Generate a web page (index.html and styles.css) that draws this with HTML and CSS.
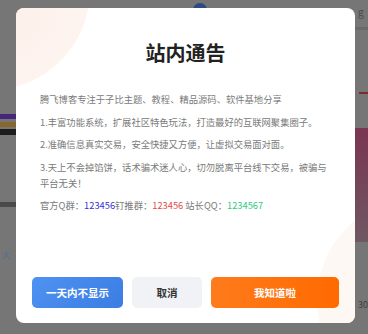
FILE: index.html
```html
<!DOCTYPE html>
<html lang="zh-CN">
<head>
  <meta charset="UTF-8">
  <meta name="viewport" content="width=device-width, initial-scale=1.0">
  <title>站内通告</title>
  <link rel="stylesheet" href="styles.css">
</head>
<body>
  <div class="page">
    <aside class="side side-left">
      <div class="bar bar-purple"></div>
      <div class="bar bar-orange"></div>
      <div class="bar bar-black"></div>
      <div class="bar bar-line"></div>
      <span class="tag">大</span>
    </aside>

    <main class="center">
      <div class="topline"><span class="avatar"></span></div>

      <div class="notice">
        <span class="glow glow-tl"></span>
        <span class="glow glow-br"></span>

        <h2 class="notice-title">站内通告</h2>

        <div class="notice-body">
          <p>腾飞博客专注于子比主题、教程、精品源码、软件基地分享</p>
          <p>1.丰富功能系统，扩展社区特色玩法，打造最好的互联网聚集圈子。</p>
          <p>2.准确信息真实交易，安全快捷又方便，让虚拟交易面对面。</p>
          <p>3.天上不会掉馅饼，话术骗术迷人心，切勿脱离平台线下交易，被骗与平台无关！</p>
          <p>官方Q群：<span class="c-blue">123456</span>钉推群：<span class="c-red">123456</span> 站长QQ：<span class="c-green">1234567</span></p>
        </div>

        <div class="notice-actions">
          <button class="btn btn-blue">一天内不显示</button>
          <button class="btn btn-gray">取消</button>
          <button class="btn btn-orange">我知道啦</button>
        </div>
      </div>
    </main>

    <aside class="side side-right">
      <span class="peek">g</span>
      <div class="rule"></div>
      <div class="mark"></div>
      <div class="block"></div>
      <span class="peek peek-num">30</span>
    </aside>
  </div>
</body>
</html>
```

FILE: styles.css
```css
body {
  margin: 0;
  background: #767676;
  font-family: "Noto Sans CJK SC", "Noto Sans", sans-serif;
  overflow: hidden;
}
.page {
  display: grid;
  grid-template-columns: 16px 339px 1fr;
  height: 334px;
}

/* dimmed page behind the dialog */
.side {
  display: flex;
  flex-direction: column;
}
.side-left {
  padding-top: 114px;
}
.bar {
  width: 16px;
  height: 5px;
}
.bar-purple { background: #45267a; }
.bar-orange { background: #86692e; margin-top: 3px; }
.bar-black { background: #1c1c1c; margin-top: 2px; height: 6px; }
.bar-line { background: #4a4a4a; margin-top: 67px; height: 5px; }
.tag {
  margin-top: 43px;
  padding-left: 2px;
  font-size: 8px;
  line-height: 10px;
  color: #4f6f94;
}

.side-right {
  padding-top: 5px;
}
.peek {
  padding-left: 3px;
  font-size: 10px;
  line-height: 14px;
  color: #4a4a4a;
}
.rule {
  margin-top: 8px;
  height: 3px;
  background: #6a6a6a;
}
.mark {
  margin-top: 62px;
  margin-left: 4px;
  width: 10px;
  height: 2px;
  background: #7a2a30;
}
.block {
  flex: none;
  margin-top: 34px;
  height: 114px;
  background: linear-gradient(#7a3552, #6e5862);
}
.peek-num {
  margin-top: 56px;
  font-size: 9px;
  color: #3e3e3e;
}

.center {
  display: flex;
  flex-direction: column;
}
.topline {
  height: 8px;
  overflow: hidden;
  padding-left: 177px;
}
.avatar {
  display: block;
  width: 14px;
  height: 14px;
  margin-top: 3px;
  border-radius: 50%;
  background: #2b4a86;
}

/* dialog */
.notice {
  position: relative;
  overflow: hidden;
  height: 315px;
  box-sizing: border-box;
  padding-top: 31px;
  padding-bottom: 15px;
  background: #fff;
  border-radius: 8px;
  display: flex;
  flex-direction: column;
}
.glow {
  position: absolute;
  border-radius: 50%;
  pointer-events: none;
}
.glow-tl {
  left: -126px;
  top: -118px;
  width: 200px;
  height: 200px;
  background: radial-gradient(circle at 62% 62%, #fdf0ea 0%, #fef6f2 60%, #fffaf8 100%);
}
.glow-br {
  left: 301px;
  top: 189px;
  width: 206px;
  height: 206px;
  background: #fef8f5;
}
.notice-title {
  position: relative;
  margin: 0;
  text-align: center;
  font-size: 20px;
  line-height: 28px;
  font-weight: 700;
  color: #222;
}
.notice-body {
  position: relative;
  padding: 0 26px 0 24px;
  margin-top: 24px;
}
.notice-body p {
  margin: 0 0 6.5px;
  font-size: 9.3px;
  line-height: 16px;
  color: #7a7a7a;
}
.c-blue { color: #3232d2; }
.c-red { color: #e24a4a; }
.c-green { color: #2fcb7f; }

.notice-actions {
  position: relative;
  margin-top: auto;
  padding: 0 16px;
  display: flex;
  gap: 9px;
}
.btn {
  height: 31px;
  border: none;
  border-radius: 5px;
  font-family: inherit;
  font-size: 10.5px;
  font-weight: 700;
  cursor: pointer;
}
.btn-blue {
  width: 91px;
  color: #fff;
  background: linear-gradient(135deg, #4e92f2, #3b7de2);
}
.btn-gray {
  width: 70px;
  color: #333;
  background: #f1f2f5;
}
.btn-orange {
  flex: 1;
  color: #fff;
  background: linear-gradient(90deg, #ff7b1c, #ff6a00);
}
```
